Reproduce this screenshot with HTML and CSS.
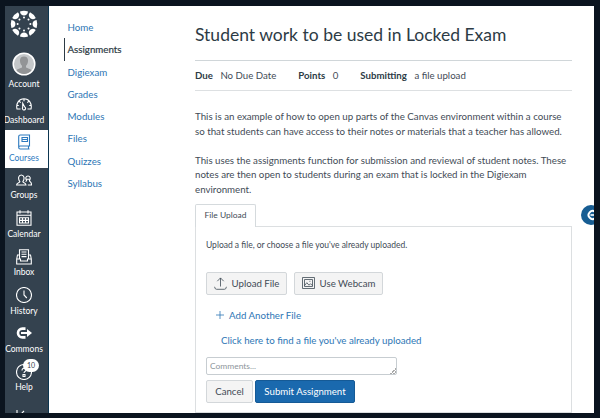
FILE: index.html
```html
<!DOCTYPE html>
<html lang="en">
<head>
    <meta charset="UTF-8">
    <meta name="viewport" content="width=device-width, initial-scale=1.0">
    <title>Student work to be used in Locked Exam</title>
    <link rel="stylesheet" href="styles.css">
</head>
<body>
    <div id="app">
        <nav class="global-nav">
            <a class="logo">
                <svg width="28" height="28" viewBox="-14 -14 28 28" fill="#fff">
                    <g id="quarter">
                        <path id="petal" d="M-4 -12.6 A13.2 13.2 0 0 1 4 -12.6 C3.8 -7.2 -3.8 -7.2 -4 -12.6Z"/>
                        <use href="#petal" transform="rotate(45)"/>
                        <circle cy="-6.4" r="1"/>
                        <circle cy="-6.4" r="1" transform="rotate(45)"/>
                    </g>
                    <use href="#quarter" transform="rotate(90)"/>
                    <use href="#quarter" transform="rotate(180)"/>
                    <use href="#quarter" transform="rotate(270)"/>
                </svg>
            </a>
            <a class="nav-item account">
                <svg width="24" height="24" viewBox="0 0 24 24">
                    <circle cx="12" cy="12" r="10.8" fill="#c4c7c9" stroke="#fff" stroke-width="1.5"/>
                    <path d="M12 4.500c-3 0-4.300 2-4 4.800.2 2 1 3.500 2 4.500v1.700c-1.500 1-4.500 1-5.500 3a10 10 0 0 0 15 0c-1-2-4-2-5.500-3v-1.700c1-1 1.800-2.500 2-4.500.3-2.800-1-4.800-4-4.800z" fill="#929496"/>
                </svg>
                <span>Account</span>
            </a>
            <a class="nav-item dashboard">
                <svg class="icon" viewBox="0 0 16 16">
                    <path d="M4.500 13H1C-.3 7.500 3 2.800 8 2.800S16.300 7.500 15 13H11.500M8 3v2.300M3.300 5.300l1.400 1.400M12.700 5.300l-1.400 1.400M.8 9.500h2M15.200 9.500h-2M6.700 7.300l2 3.600a1.600 1.600 0 1 1-2 .5z"/>
                </svg>
                <span>Dashboard</span>
            </a>
            <a class="nav-item active">
                <svg class="icon" viewBox="0 0 16 16">
                    <path d="M2.700 13.500V2.500Q2.700 1 4.200 1H13.500V12H4.200Q2.700 12 2.700 13.500T4.200 15H13.500M12.500 12v3M6 3.500h5.500v4H6zM6 5.500h5.500"/>
                </svg>
                <span>Courses</span>
            </a>
            <a class="nav-item">
                <svg class="icon" viewBox="0 0 16 16">
                    <path d="M.6 13c0-2.500 3-2 3.300-3.300C1.600 6.500 2.500 3 5.300 3S9 6.500 6.800 9.700C7 11 10 10.500 10 13zM9.500 9.600c.8-.3 1.200-.6 1.200-1C9 6.300 10 4 12 4s3 2.300 1.400 4.600c.1 1.300 2.200 1 2.200 4.400h-3.800M10.300 7.200h3.400"/>
                </svg>
                <span>Groups</span>
            </a>
            <a class="nav-item">
                <svg class="icon" viewBox="0 0 16 16">
                    <path d="M1 2h14v13.300H1zM1 5.300h14M4 .3v3.200M12 .3v3.200M3.500 7.800h9v5.200h-9zM3.500 10.400h9M6.500 7.800v5.200M9.500 7.800v5.200"/>
                </svg>
                <span>Calendar</span>
            </a>
            <a class="nav-item">
                <svg class="icon" viewBox="0 0 16 16">
                    <path d="M3.500 10V.8h9V10M5.500 3h5M5.500 5.300h5M5.500 7.600h5M3.500 6H1.500L.7 10v5h14.600v-5L14.500 6h-2M.7 10h3.800v2h7v-2h3.800"/>
                </svg>
                <span>Inbox</span>
            </a>
            <a class="nav-item">
                <svg class="icon" viewBox="0 0 16 16">
                    <circle cx="8" cy="8" r="7.500"/>
                    <path d="M8 3.500V8l2.800 3"/>
                </svg>
                <span>History</span>
            </a>
            <a class="nav-item">
                <svg class="icon" viewBox="0 0 16 16">
                    <path d="M9.500 3.600H6.400A4.400 4.400 0 0 0 6.400 12.400H9.500" stroke-width="2.600"/>
                    <path d="M5 7h6V4l5 4-5 4V9H5z" fill="#fff" stroke="none"/>
                </svg>
                <span>Commons</span>
            </a>
            <a class="nav-item">
                <svg class="icon" viewBox="0 0 16 16">
                    <circle cx="8" cy="8" r="7.500"/>
                    <path d="M6 6.500c0-3 4-3 4-.5 0 1.500-2 1.500-2 3M7 10.500h2v2H7z"/>
                </svg>
                <b class="badge">10</b>
                <span>Help</span>
            </a>
            <a class="nav-item collapse">
                <svg class="icon" viewBox="0 0 16 16">
                    <path d="M1 1v14M5 5l3-3"/>
                </svg>
            </a>
        </nav>

        <ul class="course-menu">
            <li>Home</li>
            <li class="current">Assignments</li>
            <li>Digiexam</li>
            <li>Grades</li>
            <li>Modules</li>
            <li>Files</li>
            <li>Quizzes</li>
            <li>Syllabus</li>
        </ul>

        <main>
            <h1>Student work to be used in Locked Exam</h1>
            <div class="details">
                <div><b>Due</b>No Due Date</div>
                <div><b>Points</b>0</div>
                <div><b>Submitting</b>a file upload</div>
            </div>
            <div class="description">
                <p>This is an example of how to open up parts of the Canvas environment within a course<br>so that students can have access to their notes or materials that a teacher has allowed.</p>
                <p>This uses the assignments function for submission and reviewal of student notes. These<br>notes are then open to students during an exam that is locked in the Digiexam<br>environment.</p>
            </div>
            <div class="tab">File Upload</div>
            <div class="panel">
                <p class="hint">Upload a file, or choose a file you've already uploaded.</p>
                <div class="row">
                    <button class="btn upload">
                        <svg width="13" height="13" viewBox="0 0 13 13"><path d="M6.500 9.500V1M3.300 4.200l3.200-3.300 3.200 3.300M.6 9.800q.2 2.500 2 2.500h7.800q1.800 0 2-2.500"/></svg>
                        Upload File
                    </button>
                    <button class="btn webcam">
                        <svg width="13" height="12" viewBox="0 0 13 12"><path d="M.5.500h12v11H.5zM2.500 2.500h8v7h-8zM2.500 8.700l2.300-3 2.200 2.500 1.500-1.500 2 2M7.400 4.300h1"/></svg>
                        Use Webcam
                    </button>
                </div>
                <a class="add-file">
                    <svg width="8" height="8" viewBox="0 0 8 8"><path d="M4 0v8M0 4h8"/></svg>
                    Add Another File
                </a>
                <a class="find-file">Click here to find a file you've already uploaded</a>
                <textarea class="comments" placeholder="Comments..."></textarea>
                <div class="actions">
                    <button class="btn cancel">Cancel</button>
                    <button class="btn submit">Submit Assignment</button>
                </div>
            </div>
        </main>

        <div class="bubble">
            <svg width="12" height="12" viewBox="0 0 12 12"><path d="M9 2.800A4 4 0 1 0 9 9.200" stroke="#fff" stroke-width="2" fill="none"/><path d="M4.500 6H12" stroke="#fff" stroke-width="1.600"/></svg>
        </div>
    </div>
</body>
</html>
```

FILE: styles.css
```css
* {
    box-sizing: border-box;
}
body {
    margin: 0;
    height: 418px;
    padding: 6px 6px 5px 5px;
    background: #0b141f;
    font-family: Lato, sans-serif;
    font-size: 9.73px;
    color: #3f4b56;
    overflow: hidden;
}
#app {
    position: relative;
    display: flex;
    height: 407px;
    background: #fff;
    overflow: hidden;
}
p, h1, ul {
    margin: 0;
    padding: 0;
}

/* global navigation */
.global-nav {
    flex: none;
    width: 44px;
    display: flex;
    flex-direction: column;
    background: #34424f;
    border-right: 1px solid #0d3650;
    overflow: hidden;
}
.logo {
    height: 42px;
    width: 38px;
    padding-top: 3.5px;
    flex: none;
}
.logo svg {
    display: block;
    margin: 0 auto;
}
.nav-item {
    position: relative;
    flex: none;
    display: flex;
    flex-direction: column;
    align-items: center;
    width: 43px;
    height: 38.4px;
    padding: 4px 5px 0 0;
    color: #fff;
    font-size: 8.5px;
    line-height: 12px;
    white-space: nowrap;
}
.nav-item span {
    margin-top: 1.5px;
}
.account {
    height: 43px;
    padding-top: 4px;
}
.dashboard {
    height: 38.5px;
    padding-top: 5px;
}
.dashboard span, .active span {
    margin-top: 2px;
}
.icon {
    width: 16px;
    height: 16px;
    flex: none;
    fill: none;
    stroke: #fff;
    stroke-width: 1.1;
}
.active {
    width: 44px;
    padding-top: 4.5px;
    padding-right: 6px;
    background: #fff;
    color: #2d7abf;
}
.active .icon {
    stroke: #2d7abf;
}
.badge {
    position: absolute;
    left: 18px;
    top: -1px;
    width: 16px;
    height: 13px;
    border-radius: 7px;
    background: #fff;
    color: #34424f;
    font-size: 7px;
    font-weight: normal;
    line-height: 13px;
    text-align: center;
}
.collapse {
    padding-top: 11px;
}

/* course menu */
.course-menu {
    flex: none;
    width: 146px;
    padding: 10px 0 0 14.5px;
    list-style: none;
    color: #2d76b5;
}
.course-menu li {
    height: 22.3px;
    line-height: 22.3px;
    padding-left: 3px;
    border-left: 1px solid transparent;
}
.course-menu .current {
    color: #2d3b45;
    border-left-color: #2d3b45;
    -webkit-text-stroke: 0.2px #2d3b45;
}

/* assignment */
main {
    width: 377px;
}
h1 {
    height: 55px;
    padding-top: 16px;
    border-bottom: 1px solid #d0d6d9;
    font-size: 17.5px;
    font-weight: normal;
    line-height: 26px;
    white-space: nowrap;
    color: #2d3b45;
}
.details {
    display: flex;
    gap: 22px;
    height: 30px;
    font-size: 9.67px;
    line-height: 29px;
    border-bottom: 1px solid #dde0e2;
}
.details b {
    margin-right: 7.5px;
    color: #2d3b45;
}
.description {
    padding-top: 18px;
    line-height: 14.6px;
    white-space: nowrap;
}
.description p {
    margin-bottom: 14.6px;
}
.description p:last-child {
    margin-bottom: 0;
}
.tab {
    position: relative;
    width: 61px;
    height: 23px;
    margin-top: 7px;
    border: 1px solid #d5dadd;
    border-bottom: none;
    border-radius: 2px 2px 0 0;
    background: #fff;
    font-size: 8.45px;
    line-height: 21px;
    text-align: center;
}
.panel {
    height: 187px;
    margin-top: -1px;
    padding: 11px 10px 0;
    border: 1px solid #dcdfe1;
}
.hint {
    font-size: 8.5px;
    line-height: 14px;
}
.row {
    display: flex;
    gap: 7px;
    margin-top: 20px;
}
.btn {
    display: flex;
    align-items: center;
    justify-content: center;
    gap: 5px;
    height: 23px;
    padding: 0;
    border: 1px solid #d3d7da;
    border-radius: 2px;
    background: #f4f4f4;
    color: #3f4b56;
    font: 9.67px Lato, sans-serif;
    white-space: nowrap;
}
.btn svg {
    fill: none;
    stroke: #3f4b56;
    stroke-width: 0.8;
}
.upload {
    width: 81px;
}
.webcam {
    width: 89px;
}
.add-file, .find-file {
    display: flex;
    align-items: center;
    gap: 5px;
    height: 14px;
    color: #2d76b5;
}
.add-file {
    margin: 13px 0 0 10px;
}
.add-file svg {
    stroke: #2d76b5;
    stroke-width: 0.8;
}
.find-file {
    margin: 11px 0 0 15px;
}
.comments {
    display: block;
    width: 191px;
    height: 18px;
    margin: 10px 0 5px;
    padding: 2px 3px;
    border: 1px solid #c7cdd1;
    border-radius: 2px;
    /* light resize grip */
    background: linear-gradient(135deg, #fff 50%, #aaa 50% 60%, #fff 60% 75%, #aaa 75% 85%, #fff 85%) no-repeat right bottom / 6px 6px;
    font: 8.45px/12px Lato, sans-serif;
    resize: none;
    overflow: hidden;
}
.comments::placeholder {
    color: #8d959b;
}
.actions {
    display: flex;
    gap: 2px;
}
.cancel {
    width: 47px;
}
.submit {
    width: 100px;
    background: #1a69ae;
    border-color: #155a96;
    color: #fff;
}

/* side button cut off by the window edge */
.bubble {
    position: absolute;
    left: 576px;
    top: 199px;
    width: 20px;
    height: 20px;
    padding: 4px 0 0 5px;
    border-radius: 50%;
    background: #175d93;
}
```
